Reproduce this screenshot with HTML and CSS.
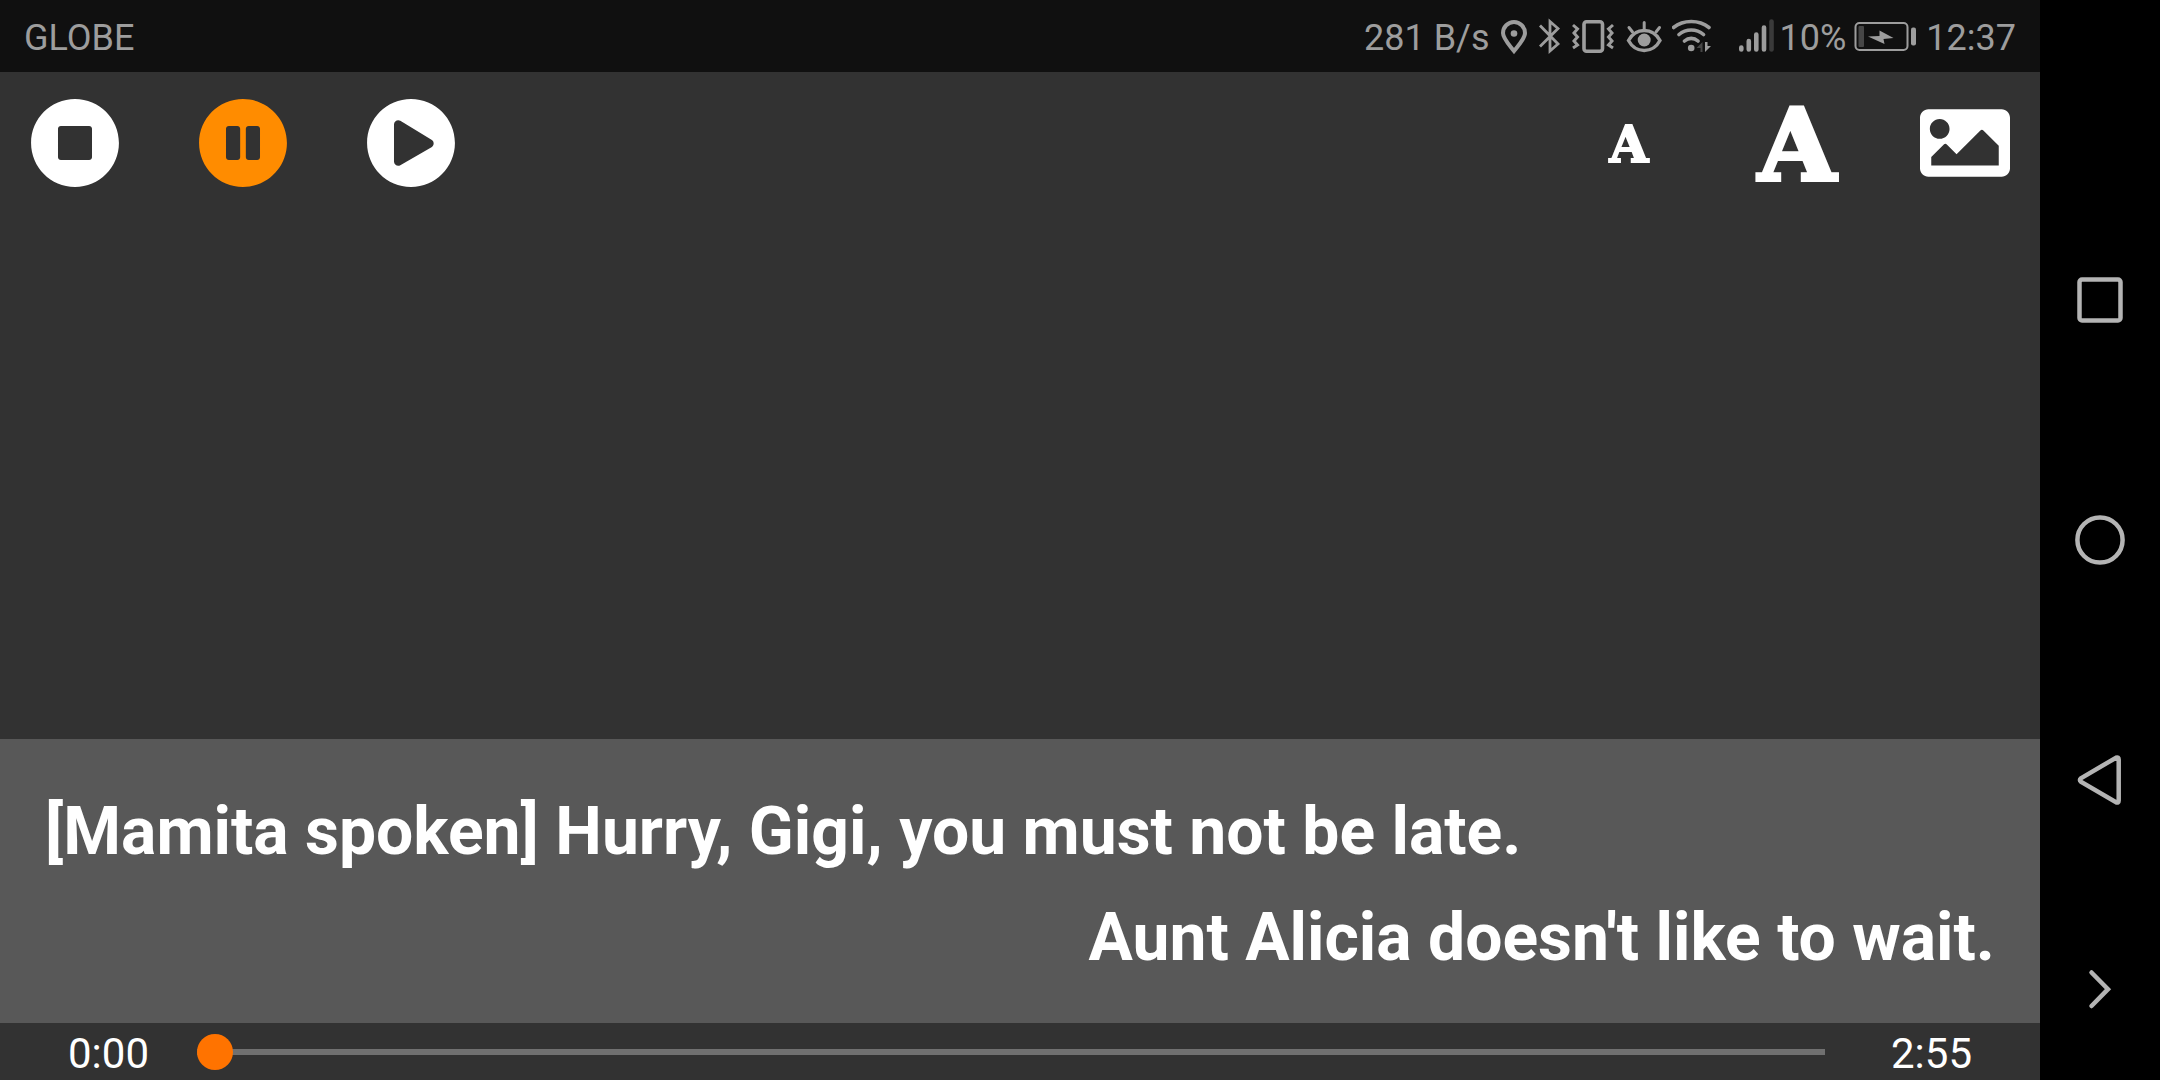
FILE: index.html
```
<!DOCTYPE html>
<html lang="en">
  <head>
    <meta charset="UTF-8" />
    <meta name="viewport" content="width=device-width, initial-scale=1.0" />
    <title>Lyrics Player</title>
    <link rel="stylesheet" href="styles.css">
  </head>
  <body>
    <div class="screen">
      <header class="status-bar">
        <span class="status-text carrier">GLOBE</span>

        <div class="status-icons">
          <span class="status-text">281 B/s</span>
          <svg width="28" height="40" viewBox="0 0 28 40" fill="none" stroke="currentColor" stroke-width="4">
            <path d="M14 35C9 28.500 3 22.500 3 17a11 11 0 0 1 22 0c0 5.500-6 11.500-11 18z" />
            <circle cx="14" cy="17.500" r="3.300" fill="currentColor" stroke="none" />
          </svg>
          <svg width="24" height="40" viewBox="0 0 24 40" fill="none" stroke="currentColor" stroke-width="2.800">
            <path d="M2 9.500L20 28l-8 7V5.500l8 7L2 30.500" />
          </svg>
          <svg width="42" height="40" viewBox="0 0 42 40" fill="none" stroke="currentColor" stroke-width="3.600">
            <rect x="12" y="5.800" width="18.500" height="29.400" rx="2.500" />
            <path d="M1 9l4.500 4L2 17l3.500 4L2 25l3.500 4L1 32M41 9l-4.500 4 3.500 4-3.500 4 3.500 4-3.500 4 4.500 3" stroke-width="3" />
          </svg>
          <svg width="38" height="40" viewBox="0 0 38 40" fill="none" stroke="currentColor" stroke-width="3.400" stroke-linecap="round">
            <path d="M4.500 24.500C8 18 13.500 14.500 20.200 14.500S32.500 18 36 24.500C32.500 31 27 34.500 20.200 34.500S8 31 4.500 24.500z" />
            <path d="M20.200 13V6.500M8.500 16L5 11.500M32 16l3.500-4.500" stroke-width="3" />
            <circle cx="20.200" cy="24" r="6.500" fill="currentColor" stroke="none" />
          </svg>
          <svg width="40" height="40" viewBox="0 0 40 40" fill="none" stroke="currentColor" stroke-width="3.600" stroke-linecap="round">
            <path d="M1.500 11.500C11.500 3.500 27 3.500 37 11.500M7 18.500c7-6 17.500-6 24.500 0M12.500 25c4-3.500 9.500-3.500 13.500 0" />
            <circle cx="19.200" cy="32" r="3.300" fill="currentColor" stroke="none" />
            <path class="dim" d="M30.500 26v10h-2v-4h-4z" stroke="none" />
            <path d="M33 26v10l6-6h-3.500v-4z" fill="currentColor" stroke="none" />
          </svg>
        </div>

        <div class="status-power">
          <svg width="38" height="40" viewBox="0 0 38 40" stroke="currentColor" stroke-width="4.600" stroke-linecap="round">
            <path d="M5.300 31.500v2M12.800 25v8.500M20.300 18.500v15M28 11.500v22" />
            <path class="dim-line" d="M35.500 5.500v28" />
          </svg>
          <span class="status-text">10%</span>
          <svg width="68" height="40" viewBox="0 0 68 40" fill="none" stroke="currentColor" stroke-width="2">
            <rect x="3.500" y="7" width="52" height="27" rx="4" />
            <rect class="dim" x="6.500" y="10" width="5.500" height="21" rx="1" stroke="none" />
            <rect x="59" y="11.500" width="5" height="18" rx="2" fill="currentColor" stroke="none" />
            <path d="M16 20.500l11.500-.5V14.500l14 7.500-10 1 1 5z" fill="currentColor" stroke="none" />
          </svg>
          <time class="status-text">12:37</time>
        </div>
      </header>

      <div class="toolbar">
        <div class="tool-group">
          <button type="button" class="tool" aria-label="Stop">
            <svg viewBox="2 2 508 508"><path d="M256 8C119 8 8 119 8 256s111 248 248 248 248-111 248-248S393 8 256 8zm96 328c0 8.800-7.200 16-16 16H176c-8.800 0-16-7.200-16-16V176c0-8.800 7.200-16 16-16h160c8.800 0 16 7.200 16 16v160z" /></svg>
          </button>
          <button type="button" class="tool active" aria-label="Pause">
            <svg viewBox="2 2 508 508"><path d="M256 8C119 8 8 119 8 256s111 248 248 248 248-111 248-248S393 8 256 8zm-16 328c0 8.800-7.200 16-16 16h-48c-8.800 0-16-7.200-16-16V176c0-8.800 7.200-16 16-16h48c8.800 0 16 7.200 16 16v160zm112 0c0 8.800-7.200 16-16 16h-48c-8.800 0-16-7.200-16-16V176c0-8.800 7.200-16 16-16h48c8.800 0 16 7.200 16 16v160z" /></svg>
          </button>
          <button type="button" class="tool" aria-label="Play">
            <svg viewBox="2 2 508 508"><path fill-rule="evenodd" d="M256 8C119 8 8 119 8 256s111 248 248 248 248-111 248-248S393 8 256 8zM371.700 280l-176 101c-15.800 8.800-35.700-2.500-35.700-21V152c0-18.400 19.800-29.800 35.700-21l176 107c16.400 9.200 16.400 32.900 0 42z" /></svg>
          </button>
        </div>
        <div class="tool-group">
          <button type="button" class="tool font-small" aria-label="Smaller text">A</button>
          <button type="button" class="tool font-large" aria-label="Larger text">A</button>
          <button type="button" class="tool" aria-label="Background image">
            <svg viewBox="0 0 512 512"><path d="M464 448H48c-26.510 0-48-21.490-48-48V112c0-26.510 21.490-48 48-48h416c26.510 0 48 21.490 48 48v288c0 26.510-21.490 48-48 48zM112 120c-30.928 0-56 25.072-56 56s25.072 56 56 56 56-25.072 56-56-25.072-56-56-56zM64 384h384V272l-87.515-87.515c-4.686-4.686-12.284-4.686-16.971 0L208 320l-55.515-55.515c-4.686-4.686-12.284-4.686-16.971 0L64 336v48z" /></svg>
          </button>
        </div>
      </div>

      <main class="lyrics">
        <p>[Mamita spoken] Hurry, Gigi, you must not be late.</p>
        <p class="next">Aunt Alicia doesn't like to wait.</p>
      </main>

      <footer class="progress">
        <span class="time elapsed">0:00</span>
        <input type="range" class="seek" min="0" max="175" value="0" aria-label="Seek" />
        <span class="time total">2:55</span>
      </footer>
    </div>

    <nav class="nav-bar">
      <button type="button" aria-label="Recent apps">
        <svg width="60" height="60" viewBox="0 0 60 60"><rect x="9.500" y="9.500" width="41" height="41" rx="2.500" /></svg>
      </button>
      <button type="button" aria-label="Home">
        <svg width="60" height="60" viewBox="0 0 60 60"><circle cx="30" cy="30" r="22.600" /></svg>
      </button>
      <button type="button" aria-label="Back">
        <svg width="60" height="60" viewBox="0 0 60 60"><path d="M10.800 28.400L46 7.700Q48.700 6.700 48.700 9.500V50.500Q48.700 53.300 46 52.300L10.800 31.600Q9 30 10.800 28.400z" /></svg>
      </button>
      <button type="button" aria-label="Hide navigation bar">
        <svg width="60" height="60" viewBox="0 0 60 60"><path d="M21.500 12.500L38 29.200 21.500 46" stroke-linecap="round" /></svg>
      </button>
    </nav>
  </body>
</html>
```
FILE: styles.css
```
* {
  box-sizing: border-box;
  margin: 0;
  padding: 0;
}

body {
  display: flex;
  min-height: 100vh;
  background-color: #000;
  font-family: Roboto, sans-serif;
}

button {
  display: flex;
  align-items: center;
  justify-content: center;
  background: none;
  border: none;
  cursor: pointer;
}

.screen {
  flex: 1;
  display: flex;
  flex-direction: column;
  background-color: #323232;
}

/* status bar */
.status-bar {
  display: flex;
  align-items: center;
  height: 72px;
  padding: 0 24px;
  background-color: #101010;
  color: #9d9d9d;
  font-size: 36px;
  line-height: 40px;
}

.status-text {
  padding-top: 3px;
}

.carrier {
  margin-right: auto;
}

.status-icons,
.status-power {
  display: flex;
  align-items: center;
}

.status-icons {
  gap: 10px;
  margin-right: 24px;
}

.status-power {
  gap: 6px;
}

.dim {
  fill: #464646;
}

.dim-line {
  stroke: #3a3a3a;
}

/* toolbar */
.toolbar {
  display: flex;
  justify-content: space-between;
  padding: 26px 30px;
}

.tool-group {
  display: flex;
  gap: 78px;
}

.tool {
  width: 90px;
  height: 90px;
  color: #fff;
  font-family: "DejaVu Serif", serif;
  font-weight: bold;
  line-height: 90px;
}

.tool svg {
  width: 100%;
  height: 100%;
  fill: currentColor;
}

.tool.active {
  color: #ff8c00;
}

.font-small {
  padding-top: 4px;
  font-size: 50px;
  -webkit-text-stroke: 2px #fff;
}

.font-large {
  padding-top: 4px;
  font-size: 100px;
  -webkit-text-stroke: 4px #fff;
}

/* lyrics */
.lyrics {
  margin-top: auto;
  padding: 40px 45px 32px;
  background-color: #585858;
  color: #fff;
  font-size: 66px;
  font-weight: bold;
  line-height: 106px;
}

.next {
  text-align: right;
}

/* progress */
.progress {
  display: flex;
  align-items: center;
  height: 57px;
  padding: 0 68px;
}

.time {
  padding-top: 4px;
  color: #fff;
  font-size: 42px;
  line-height: 48px;
}

.elapsed {
  margin-right: 48px;
}

.total {
  margin-left: 66px;
}

.seek {
  flex: 1;
  height: 36px;
  appearance: none;
  background: none;
  cursor: pointer;
}

.seek::-webkit-slider-runnable-track {
  height: 6px;
  background-color: #707070;
}

.seek::-webkit-slider-thumb {
  appearance: none;
  width: 36px;
  height: 36px;
  margin-top: -15px;
  border-radius: 50%;
  background-color: #ff7300;
}

/* navigation bar */
.nav-bar {
  display: grid;
  grid-template-rows: 3fr 4fr 4fr 4fr 3fr;
  width: 120px;
}

/* keeps the first row empty */
.nav-bar::before {
  content: "";
}

.nav-bar svg {
  fill: none;
  stroke: #b4b4b4;
  stroke-width: 4.500;
}
```
